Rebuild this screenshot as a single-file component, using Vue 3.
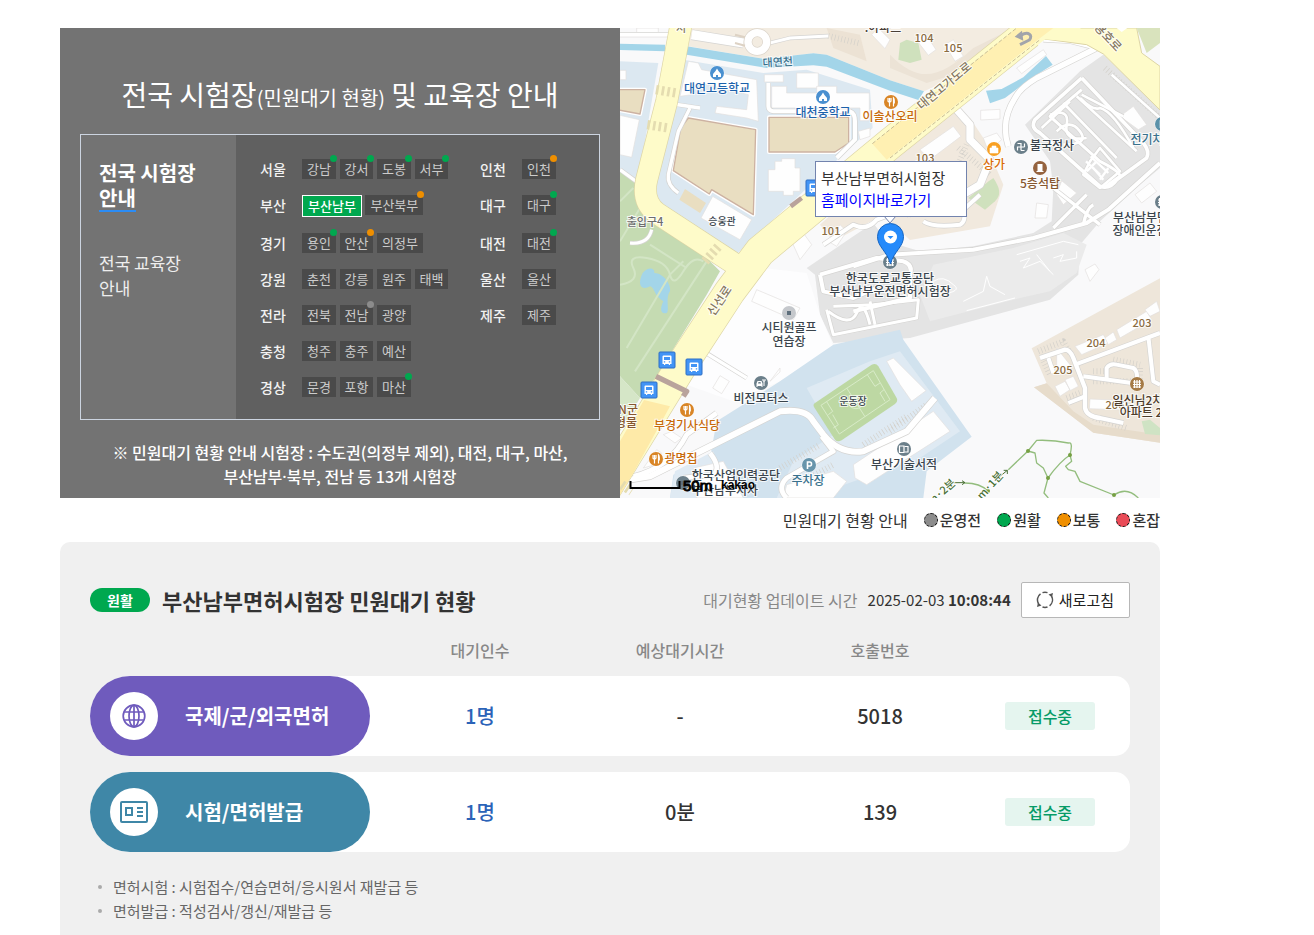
<script setup>
const regionRows = [
  [['서울', [['강남', 'ok'], ['강서', 'ok'], ['도봉', 'ok'], ['서부', 'ok']]], ['인천', [['인천', 'mid']]]],
  [['부산', [['부산남부', 'on'], ['부산북부', 'mid']]], ['대구', [['대구', 'ok']]]],
  [['경기', [['용인', 'ok'], ['안산', 'mid'], ['의정부']]], ['대전', [['대전', 'ok']]]],
  [['강원', [['춘천'], ['강릉'], ['원주'], ['태백']]], ['울산', [['울산']]]],
  [['전라', [['전북'], ['전남', 'off'], ['광양']]], ['제주', [['제주']]]],
  [['충청', [['청주'], ['충주'], ['예산']]]],
  [['경상', [['문경'], ['포항'], ['마산', 'ok']]]]
]

const legend = [
  ['off', '운영전'],
  ['ok', '원활'],
  ['mid', '보통'],
  ['busy', '혼잡']
]

const queues = [
  { kind: 'globe', name: '국제/군/외국면허', waiting: '1명', time: '-', call: '5018' },
  { kind: 'card', name: '시험/면허발급', waiting: '1명', time: '0분', call: '139' }
]

/* Map geometry, three units per pixel. */
const zones = [
  ['#f3ece1', 'M215 0H1190L1000 150L912 190L810 157L620 80L580 76L430 92L205 55Z'],
  ['#ece3d6', 'M810 80C900 170 960 150 1060 60L1180 0L1000 140L920 165L810 120Z'],
  ['#ece2d4', 'M620 0L640 60L740 100L720 20Z'],
  ['#cfe1bd', 'M840 45L860 35L895 45L905 95L870 105L835 95Z'],
  ['#a3d5e9', 'M0 47L135 50V70L0 66Z'],
  ['#a3d5e9', 'M200 55L430 92L580 76L620 80L810 157L912 190L895 216L810 188L620 116L580 112L440 120L200 80Z'],
  ['#a3d5e9', 'M1098 188L1145 183L1210 148L1278 84L1298 110L1235 150L1155 210L1110 226Z'],
  ['#dce8f1', 'M190 95L430 135L560 125L750 185L758 300L700 350L345 683L110 520L100 480L150 250Z'],
  ['#dce8f1', 'M0 100L115 105L90 250L60 430L45 460L0 430Z'],
  ['#c5dbb2', 'M0 425L50 465L55 530L130 600L230 660L300 730L260 800L110 1045L60 1110L0 1045Z'],
  ['#d5e6c7', 'M0 1045L60 1110L0 1210Z'],
  ['#f1e9de', 'M800 405L1000 240L1050 270L1090 330L1150 470L1110 595L870 636L790 560L640 640L600 590Z'],
  ['#cfe1bd', 'M1045 510C1080 480 1105 460 1120 450C1140 480 1145 500 1125 520L1095 545Z'],
  ['#e4e4e4', 'M1450 80L1380 130L1215 290L1290 400L1300 480L1295 580L1240 615L1060 655L900 670L800 640L760 585L700 625L560 720L585 740L600 860L640 945L870 930L1290 815L1375 740L1380 650L1440 580L1560 470L1620 420V240Z'],
  ['#ebebeb', 'M1180 660L1330 615L1400 650L1370 735L1290 790L1200 810L930 880L900 800L940 710Z'],
  ['#fdfdfe', 'M430 720L560 735L600 860L640 955L480 1060L340 1120L200 1070L290 900Z'],
  ['#d1e2ee', 'M640 950L840 905L850 935L1055 1226L920 1330L910 1410H150L160 1340L270 1290L290 1180L480 1060Z'],
  ['#dfeaf3', 'M560 1080L750 1000L840 970L1020 1210L900 1290L560 1410H470L520 1300L640 1220Z'],
  ['#dfeaf3', 'M150 1410L165 1330L280 1270L330 1410Z'],
  ['#eee6da', 'M1235 961L1620 751V1244L1420 1214L1242 1078L1280 1066Z'],
  ['#e7dccb', 'M1242 1078L1280 1066L1360 1150L1420 1190L1620 1220V1244L1420 1214Z'],
  ['#cfe3c4', 'M1565 1180L1590 1175L1620 1200V1222L1575 1218Z'],
  ['#a3d5e9', 'M68 735C85 715 105 720 103 735C130 735 155 770 150 790C135 810 150 850 140 855C120 860 120 840 130 820C100 800 105 780 90 775C65 790 50 770 68 735Z']
]

const roads = [
  [12, 'M0 20H150'], [28, 'M215 20L370 45'], [9, 'M430 50L510 30L625 24'],
  [10, 'M160 228L240 240'], [10, 'M210 240L175 310L145 440Q140 470 175 495'],
  [12, 'M445 165V235Q445 248 460 250H690Q705 255 705 280V335L650 390'],
  [10, 'M0 425L55 465'], [9, 'M95 605Q85 650 30 645'],
  [16, 'M1165 355Q1140 280 1185 210Q1200 180 1250 150L1430 60'],
  [7, 'M1270 38L1350 42L1440 65'],
  [22, 'M1010 245L1050 290V335L1110 395L1080 470L970 535'],
  [12, 'M610 650L700 590Q740 610 770 575L810 560M910 580Q940 600 1020 590Q1040 580 1030 545L1080 500'],
  [12, 'M700 715L810 680L1060 665L1240 630L1400 585L1465 545L1620 405'],
  [10, 'M1300 480L1440 590M1390 590Q1400 540 1420 530M1300 600L1400 500'],
  [11, 'M1385 150L1245 275Q1230 300 1260 315L1440 475Q1470 485 1490 455L1580 390Q1590 370 1570 345L1385 150'],
  [9, 'M1385 185L1290 265L1440 400Q1500 430 1500 445L1450 480'],
  [8, 'M1330 225L1490 390M1370 205L1550 370M1265 300L1350 220'],
  [8, 'M1290 260Q1350 240 1340 290T1400 330M1310 310Q1350 270 1380 310T1330 350M1380 210Q1420 250 1440 240Q1480 250 1540 360'],
  [8, 'M1410 400L1390 440L1440 480L1500 430L1440 360ZM1385 200L1510 265'],
  [8, 'M1475 140L1620 270'],
  [12, 'M600 740L770 690L850 700Q880 710 870 740V810L700 850M600 740L610 790L700 810L770 780'],
  [9, 'M620 845L640 920L890 870L895 815L760 830L640 835M625 850Q690 900 710 855T750 890M750 820L765 890'],
  [18, 'M30 1355L90 1345L260 1260L380 1200L480 1150Q560 1140 580 1180L610 1220Q660 1280 730 1270L860 1210L945 1110'],
  [14, 'M40 1345Q150 1320 200 1220L290 1155M270 1275Q305 1320 280 1340L190 1350'],
  [14, 'M605 1225L640 1270L500 1350Q470 1380 500 1410'],
  [10, 'M250 970L380 1050'],
  [13, 'M1260 990L1335 965Q1350 965 1360 990L1395 1080V1140Q1400 1165 1440 1170L1510 1185'],
  [12, 'M1365 1010L1620 915M1390 1045L1535 1065M1460 1050V1020Q1470 1005 1490 1010L1540 1020Q1555 1030 1550 1060M1585 925L1600 1060L1620 1070M1345 1125L1395 1105M1285 990L1300 1035']
]

const buildings = [
  'M205 100L235 105L245 125L410 155L415 280L380 270L285 255L290 235L380 245L385 200L240 165L215 200L180 205Z',
  'M433 140H490V162H433Z', 'M530 135H595V180H530Z', 'M455 175H500V195H590V175H650V195H748V278H720V240H455Z',
  'M485 392H525V420H540V490H520V502H490V490H445V425H465V400H485Z', 'M278 505L395 575L360 635L243 570Z',
  'M0 262L58 275L35 388L0 380Z', 'M0 127H18V155H0Z', 'M50 0H115V22H50Z', 'M755 20L775 0L810 35L795 62Z',
  'M885 30L915 15L948 65L925 82Z', 'M975 50L1000 35L1030 85L1005 100Z',
  'M1190 120L1270 65L1280 80L1205 137Z', 'M1082 247L1140 244V273L1082 276Z', 'M1090 330L1130 315L1145 335L1105 370Z',
  'M900 365L1000 295L1023 325L930 395Z', 'M515 640L550 615L575 650L540 695Z', 'M625 640L660 590L680 610L650 655Z',
  'M715 310L750 300V325L720 335Z', 'M1250 525L1285 530L1280 570L1245 570Z',
  'M1310 500L1325 458L1370 495L1330 530Z', 'M1500 265L1540 235L1580 290L1555 305Z', 'M1545 500L1590 465L1610 490L1565 525Z',
  'M410 785L540 840L520 875L395 820Z', 'M300 1043L328 1060L305 1097L278 1080Z', 'M450 1060L480 1020L480 1032Z', 'M155 1210L185 1230L165 1245L130 1220Z',
  'M800 1000L820 990L880 1050L918 1088L875 1120L840 1070Z', 'M700 1310L940 1150L990 1210L740 1370L705 1350Z',
  'M500 1370L640 1330L680 1360L640 1410H490Z', 'M220 1320L310 1300L370 1410H230Z',
  'M1365 955L1450 920L1465 945L1385 980Z', 'M1455 930L1480 912L1490 935L1465 950Z', 'M1490 905L1580 850L1595 875L1500 930Z',
  'M1575 845L1610 820L1620 850L1590 865Z', 'M1305 1075L1335 1060L1350 1085L1320 1105ZM1335 1055L1360 1045L1375 1075L1350 1088Z',
  'M1410 1113L1520 1118V1146L1408 1142Z', 'M1395 725L1425 708L1437 725L1410 760Z',
  'M70 1320L110 1265L125 1275L105 1310Z', 'M1310 960L1350 1010L1335 1035L1310 1020Z'
]

const stalls = [
  'M625 24L718 46', 'M1020 250L1050 300M1015 360L1110 440M1040 350L1000 440L950 480', 'M1455 120L1620 270',
  'M950 450L860 500M1010 540L860 560', 'M480 1320L600 1250M730 1250L860 1165M810 1210L920 1130M530 1370L640 1310',
  'M1255 970L1330 940L1350 975M1270 1000L1290 1040M1420 1030H1460M1480 995L1560 1010M1420 1170L1520 1200M1340 1110L1380 1095M1560 1020V1060M1420 1060H1540'
]

/* Labels: text, x, y, colour, size, angle. Map pixels. */
const navy = '#1c62ac'
const dark = '#3a444c'
const rust = '#c86a0a'
const brown = '#8a6c42'
const teal = '#39718c'
const labels = [
  ['.아파트', 263, 4, '#4a4038'], ['대연천', 158, 38, teal, 11, -3],
  ['대연고등학교', 97, 65, navy], ['대천중학교', 203, 89, navy], ['이솔산오리', 270, 93, rust],
  ['104', 304, 14, brown, 11], ['105', 333, 24, brown, 11], ['103', 305, 134, brown, 11], ['101', 211, 207, brown, 11],
  ['대연고가도로', 327, 61, '#85775f', 12, -40], ['용호로', 485, 12, '#85775f', 12, 47], ['신선로', 103, 275, '#85775f', 12, -56], ['서', 61, 4, '#85775f', 11],
  ['불국정사', 432, 122, dark], ['상가', 374, 141, '#d96b05'], ['5층석탑', 420, 160, '#86572f'],
  ['전기차', 527, 116, teal], ['부산남부면허', 526, 194, dark], ['장애인운전', 520, 207, dark],
  ['출입구4', 25, 198, '#6d6d6d', 11], ['승웅관', 102, 197, dark, 10],
  ['한국도로교통공단', 270, 255, dark], ['부산남부운전면허시험장', 270, 268, dark],
  ['시티원골프', 169, 304, dark], ['연습장', 169, 318, dark], ['비전모터스', 141, 375, dark], ['운동장', 233, 377, dark, 10],
  ['부경기사식당', 67, 402, rust], ['광명집', 61, 435, rust], ['N군', 8, 386, '#86572f'], ['형물', 6, 399, '#86572f'],
  ['한국산업인력공단', 116, 452, dark], ['부산남부지사', 105, 467, dark], ['주차장', 188, 457, teal], ['부산기술서적', 284, 441, dark],
  ['203', 522, 299, brown, 11], ['204', 476, 319, brown, 11], ['205', 443, 346, brown, 11], ['206', 495, 381, brown, 11],
  ['일신님2차', 518, 377, '#4d3c2b'], ['아파트 2', 521, 389, '#4d3c2b'],
  ['m·2분', 324, 467, '#497035', 11, -42], ['m·1분', 373, 460, '#497035', 11, -48]
]

const pins = [
  ['school', 97, 45, '#4a90d0'], ['school', 203, 69, '#4a90d0'], ['food', 271, 74, '#d98526'], ['bag', 374, 121, '#f8a023'],
  ['temple', 401, 119, '#6b7f8a'], ['box', 420, 140, '#95633f'], ['dot', 169, 285, '#c5c8cc'], ['car', 141, 355, '#6b7f8a'],
  ['food', 67, 382, '#d98526'], ['food', 36, 431, '#d98526'], ['park', 189, 437, '#6795ac'], ['book', 284, 421, '#6b7f8a'],
  ['flats', 517, 356, '#a57a45'], ['flats', 270, 234, '#6b7f8a'], ['park', 542, 96, '#5a91a9'], ['flats', 542, 174, '#6b7f8a'], ['dot', 63, 455, '#6b7f8a']
]

const stops = [[194, 160], [47, 332], [74, 339], [29, 362]]
</script>

<template>
  <main class="page">
    <section class="intro">
      <div class="finder">
        <h1 class="finder-title">전국 시험장<small>(민원대기 현황)</small> 및 교육장 안내</h1>
        <div class="finder-box">
          <nav class="tabs">
            <a href="#" class="tab active">전국 시험장<br><span>안내</span></a>
            <a href="#" class="tab">전국 교육장<br><span>안내</span></a>
          </nav>
          <div class="regions">
            <div v-for="(row, i) in regionRows" :key="i" class="region-row">
              <div v-for="[region, cities] in row" :key="region" class="region">
                <strong class="region-name">{{ region }}</strong>
                <div class="cities">
                  <template v-for="[city, state] in cities" :key="city">
                    <a href="#" class="city" :class="{ selected: state === 'on' }">{{ city }}<i v-if="state && state !== 'on'" class="dot" :class="state"></i></a>{{ ' ' }}
                  </template>
                </div>
              </div>
            </div>
          </div>
        </div>
        <p class="finder-note">※ 민원대기 현황 안내 시험장 : 수도권(의정부 제외), 대전, 대구, 마산,<br>부산남부<span class="mid-dot">·</span>북부, 전남 등 13개 시험장</p>
      </div>

      <div class="map">
        <svg class="map-canvas" viewBox="0 0 540 470" preserveAspectRatio="xMidYMid slice" role="img" aria-label="부산남부면허시험장 지도">
          <rect width="540" height="470" fill="#f9f9fa" />
          <g transform="scale(.33333)" fill="none" stroke-linejoin="round">
            <path v-for="([fill, d], i) in zones" :key="'z' + i" :d="d" :fill="fill" />
            <g stroke="#d3e5c5" stroke-width="6">
              <path d="M20 960L150 740L190 700M45 1030L260 700M0 520L40 480M0 640L60 540M90 650L200 720M0 770Q60 760 40 720T80 690T150 740T190 730T250 700" />
            </g>
            <g fill="#e9dec1">
              <g stroke="#fff" stroke-width="12">
                <path d="M205 270L407 305L400 560L275 485L268 498L160 428L182 300Z" />
                <path d="M447 268H686V345L645 372H447Z" /><path d="M-10 185H75L60 258L-10 245Z" />
              </g>
              <g stroke="#cdb2a2" stroke-width="4">
                <path d="M205 270L407 305L400 560L275 485L268 498L160 428L182 300Z" />
                <path d="M447 268H686V345L645 372H447Z" /><path d="M-10 185H75L60 258L-10 245Z" />
              </g>
              <path d="M195 483L258 525L240 555L178 515Z" />
            </g>
            <path v-for="(d, i) in stalls" :key="'s' + i" :d="d" stroke="#d3d0ca" stroke-width="18" stroke-dasharray="2 8" />
            <path v-for="(d, i) in buildings" :key="'b' + i" :d="d" fill="#fefefe" stroke="#e2e0de" stroke-width="2" />
            <path v-for="([w, d], i) in roads" :key="'c' + i" :d="d" stroke="#d5d4d2" :stroke-width="w + 4" />
            <path v-for="([w, d], i) in roads" :key="'r' + i" :d="d" stroke="#fff" :stroke-width="w" />
            <g stroke="#fff" stroke-width="3">
              <path d="M940 760Q970 740 1000 770Q1030 790 960 800M1030 820L1090 790L1100 745L1110 775L1155 800M1040 848L1185 810M1190 680L1330 640L1375 650M1200 700L1230 690L1210 720L1260 700L1300 740M1250 680L1290 730M1300 690L1330 680L1320 700L1370 690V670" />
              <path d="M1398 400L1440 440M1412 385L1465 435M1400 430L1430 400M1440 455L1465 420M1420 420L1450 455" stroke-width="7" />
            </g>
            <circle cx="412" cy="42" r="28" stroke="#dbd4ca" stroke-width="26" /><circle cx="412" cy="42" r="28" stroke="#fff" stroke-width="22" />

            <!-- main roads -->
            <g stroke="#ddd5a6">
              <path d="M1225 15L810 347L420 670L330 790L180 1020L20 1280L-60 1410" stroke-width="96" />
              <path d="M185 -20L140 220L80 455Q65 520 110 555L340 705" stroke-width="68" />
              <path d="M1240 0H1550L1565 75L1620 115V246L1450 78L1400 50L1265 32L1200 60Z" fill="#fefbc9" stroke-width="3" />
            </g>
            <g stroke="#fefbc9">
              <path d="M1330 -68L1225 15L810 347L420 670L330 790L180 1020L20 1280L-60 1410" stroke-width="92" />
              <path d="M185 -20L140 220L80 455Q65 520 110 555L370 725" stroke-width="64" />
            </g>
            <path d="M1380 0L1425 45L1270 34L1300 0Z" fill="#fefbc9" />
            <path d="M757 347L1190 0H1300L1250 38L800 395Z" fill="#fff0b2" />
            <path d="M72 1116L150 1135L40 1335L0 1400V1240Z" fill="#feeaa8" />
            <path d="M757 347L1190 0M810 390L1260 35" stroke="#c9bd96" stroke-width="3" stroke-dasharray="12 6" />
            <path d="M1550 0H1620V45L1580 75Z" fill="#d9e3bd" />
            <path d="M1490 0H1522L1505 12Z" fill="#fff" />
            <path d="M108 1045L200 1090L190 1105" stroke="#b9a39c" stroke-width="16" />
            <path d="M512 535L545 510" stroke="#b9a39c" stroke-width="14" />
            <g stroke="#e4dcb0" stroke-width="28" stroke-dasharray="8 9">
              <path d="M108 185L168 195M82 290L145 300M255 700L300 650M5 1370L35 1390" />
            </g>
            <path d="M345 20L375 28M345 45L375 53" stroke="#ddd2c4" stroke-width="6" />
            <path d="M1203 22C1225 8 1240 22 1228 36L1200 50" stroke="#a2a4aa" stroke-width="9" />
            <path d="M1184 26L1206 8L1210 38Z" fill="#a2a4aa" />

            <!-- football pitch -->
            <path d="M585 1125L755 1010Q768 1004 775 1015L830 1110Q835 1120 825 1128L665 1237Q652 1243 645 1235L582 1137Q578 1130 585 1125Z" fill="#bdd8a3" />
            <path d="M603 1132L760 1028L810 1115L658 1218ZM680 1080L735 1166M620 1121L638 1150L625 1160M640 1200L655 1190L638 1160M742 1040L765 1075L780 1065M795 1120L780 1095L792 1085" stroke="#d8ebc8" stroke-width="3" />
            <ellipse cx="708" cy="1123" rx="22" ry="19" stroke="#d8ebc8" stroke-width="3" />

            <!-- walking trail -->
            <g stroke="#93bd7d" stroke-width="4">
              <path d="M1035 1365Q1080 1365 1104 1389M1165 1325L1224 1269L1250 1237Q1300 1235 1345 1245Q1360 1240 1350 1281Q1320 1300 1284 1350L1272 1395L1285 1410M1224 1269L1245 1275L1250 1305L1270 1320L1284 1350M1350 1281L1355 1300L1337 1315L1345 1325L1365 1330L1380 1360L1482 1401Q1520 1375 1555 1410" />
            </g>
            <path d="M1000 1364H1035M1026 1358L1035 1364L1026 1370M1140 1345L1162 1327M1151 1327H1162V1338" stroke="#497035" stroke-width="3" />
            <g fill="#76a043"><circle cx="1104" cy="1389" r="6" /><circle cx="1224" cy="1269" r="6" /><circle cx="1350" cy="1281" r="6" /><circle cx="1284" cy="1350" r="6" /><circle cx="1482" cy="1401" r="6" /></g>
          </g>

          <g v-for="([x, y], i) in stops" :key="'t' + i" :transform="`translate(${x} ${y})`">
            <rect x="-8" y="-8" width="16" height="16" rx="1" fill="#4294f5" stroke="#2e6fc4" />
            <path d="M-3.5 -4.5H3.5Q4.5 -4.5 4.5 -3.5V4H3V5H1.8V4H-1.8V5H-3V4H-4.5V-3.5Q-4.5 -4.5 -3.5 -4.5ZM-3 -3V0H3V-3ZM-3.2 1.3V2.5H-1.8V1.3ZM1.8 1.3V2.5H3.2V1.3Z" fill="#fff" fill-rule="evenodd" />
          </g>

          <g v-for="([kind, x, y, color], i) in pins" :key="'p' + i" :transform="`translate(${x} ${y})`">
            <circle r="7.5" fill="#fff" opacity=".7" />
            <circle r="7" :fill="color" />
            <path v-if="kind === 'school'" d="M0 -4.5L1.5 -2L4 1V4H1V2H-1V4H-4V1L-1.5 -2Z" fill="#fff" />
            <path v-else-if="kind === 'food'" d="M-3 -4V-1Q-3 0 -1.5 0Q0 0 0 -1V-4M-1.5 -4V4.5M2.5 4.5V-4Q3.5 -3 3.3 1H2.5" fill="none" stroke="#fff" stroke-width="1.2" />
            <path v-else-if="kind === 'bag'" d="M-4 -1H4V4H-4ZM-2 -1V-3H2V-1" fill="#fff" stroke="#fff" stroke-width=".6" />
            <path v-else-if="kind === 'temple'" d="M0 3.5V-3.5H-3.5M3.5 0H-3.5V3.5M0 3.5H3.5M3.5 0V-3.5" fill="none" stroke="#fff" stroke-width="1.2" />
            <path v-else-if="kind === 'box'" d="M-2.5 -4H2.5V3H3.5V4H-3.5V3H-2.5Z" fill="#fff" />
            <rect v-else-if="kind === 'dot'" x="-2" y="-2" width="4" height="4" fill="#5e6f7c" />
            <g v-else-if="kind === 'car'">
              <path d="M-4.5 4V.5L-3.5 -2H.5L1.5 .5V4H.5V3H-3.5V4ZM-3 .5H0L-.5 -1H-2.5Z" fill="#fff" fill-rule="evenodd" />
              <path d="M2 -4V-2H4V-4M3 -2V3" fill="none" stroke="#fff" />
            </g>
            <path v-else-if="kind === 'book'" d="M-4.5 -3H0V3.5H-4.5ZM.8 -2.5H4V3H.8" fill="none" stroke="#fff" stroke-width="1.2" />
            <path v-else-if="kind === 'park'" d="M-1.5 4V-3H.8Q2.5 -3 2.5 -1Q2.5 1 .8 1H-1.5" fill="none" stroke="#fff" stroke-width="1.6" />
            <path v-else d="M-2.5 -4V4M0 -4V4M2.5 -4V4M-4 -2H4M-4 .5H4M-4 3H4" fill="none" stroke="#fff" stroke-width="1.2" />
          </g>

          <text
            v-for="([text, x, y, color, size, angle], i) in labels"
            :key="'l' + i"
            class="map-label"
            :x="x" :y="y" :fill="color" :font-size="size || 12"
            :transform="angle ? `rotate(${angle} ${x} ${y})` : null"
          >{{ text }}</text>

          <path d="M10.5 453V460H59.5V453" fill="none" stroke="#000" stroke-width="2" />
          <text class="scale-label" x="63" y="463">50m</text>
          <text class="brand-label" x="101" y="461">kakao</text>

          <path d="M264 188L270 195L276 188" fill="#fff" stroke="#7283ae" />
          <path d="M270.5 236C267 223 257.5 219 257.5 208.5A13 13 0 0 1 283.5 208.5C283.5 219 274 223 270.5 236Z" fill="#258afa" stroke="#1665c2" />
          <circle cx="270.5" cy="209" r="6.5" fill="#fff" /><path d="M267.5 208H273.5L270.5 211Z" fill="#258afa" />
        </svg>
        <div class="popup">
          <span>부산남부면허시험장</span>
          <a href="#">홈페이지바로가기</a>
        </div>
      </div>
    </section>

    <div class="legend">
      <span class="legend-title">민원대기 현황 안내</span>
      <span v-for="[state, text] in legend" :key="state" class="legend-item"><i class="legend-dot" :class="state"></i>{{ text }}</span>
    </div>

    <section class="status">
      <header class="status-head">
        <span class="status-badge">원활</span>
        <h2>부산남부면허시험장 민원대기 현황</h2>
        <span class="update-label">대기현황 업데이트 시간</span>
        <time class="update-time">2025-02-03 <b>10:08:44</b></time>
        <button type="button" class="refresh">
          <svg width="18" height="18" viewBox="0 0 18 18" fill="none" stroke="#555" stroke-width="1.5">
            <path d="M6.5 1.6A7.5 7.5 0 0 1 11.5 1.6M15.6 5.4A7.5 7.5 0 0 1 13.6 14.8M11.5 16A7.5 7.5 0 0 1 6.5 16M2.6 12.8A7.5 7.5 0 0 1 4.5 2.8" />
            <path d="M12.5 3.5L17 2L16 6.5ZM5.5 14.5L1 16L2 11.5Z" fill="#555" stroke="none" />
          </svg>
          새로고침
        </button>
      </header>

      <table class="queue">
        <thead>
          <tr><th class="col-name"></th><th>대기인수</th><th>예상대기시간</th><th>호출번호</th><th class="col-state"></th></tr>
        </thead>
        <tbody>
          <tr v-for="q in queues" :key="q.kind">
            <td class="name-cell">
              <div class="pill" :class="q.kind">
                <span class="pill-icon">
                  <svg v-if="q.kind === 'globe'" width="24" height="24" viewBox="0 0 24 24" fill="none" stroke="#6f5bbd" stroke-width="1.7">
                    <circle cx="12" cy="12" r="10.8" /><ellipse cx="12" cy="12" rx="5" ry="10.8" /><path d="M12 1V23M2.2 8H21.8M2.2 16H21.8" />
                  </svg>
                  <svg v-else width="28" height="22" viewBox="0 0 28 22" fill="none" stroke="#3f87a7" stroke-width="2">
                    <rect x="1" y="1" width="26" height="20" rx="1" /><rect x="6" y="7" width="6" height="7" /><path d="M17 7H23M17 11H23M17 15H23" />
                  </svg>
                </span>
                {{ q.name }}
              </div>
            </td>
            <td class="waiting">{{ q.waiting }}</td>
            <td>{{ q.time }}</td>
            <td>{{ q.call }}</td>
            <td class="state-cell"><span class="state">접수중</span></td>
          </tr>
        </tbody>
      </table>

      <ul class="notes">
        <li>면허시험 : 시험접수/연습면허/응시원서 재발급 등</li>
        <li>면허발급 : 적성검사/갱신/재발급 등</li>
      </ul>
    </section>
  </main>
</template>

<style>
body { margin: 0; background: #fff; }
</style>

<style scoped>
.page {
  box-sizing: border-box;
  max-width: 1160px;
  padding: 28px 0 0 60px;
  color: #333;
  font: 400 16px/24px "Noto Sans CJK KR", sans-serif;
}
a { color: inherit; text-decoration: none; }
.intro { display: grid; grid-template-columns: 56fr 54fr; }

.finder { padding: 44px 20px 10px; background: #737373; color: #fff; }
.finder-title { margin: 0 0 18px; font-size: 28px; font-weight: 400; line-height: 44px; text-align: center; white-space: nowrap; }
.finder-title small { font-size: 20px; line-height: 1; }
.finder-box { display: flex; border: 1px solid #ccd4e0; }
.tabs { flex: 0 0 155px; box-sizing: border-box; padding: 25px 0 0 18px; }
.tab { display: block; margin-bottom: 38px; color: #eee; font-size: 17px; line-height: 25px; }
.tab.active { color: #fff; font-size: 20px; font-weight: 700; }
.tab.active span { display: inline-block; border-bottom: 2px solid #2b8cf5; }
.regions { flex: 1; display: flex; flex-direction: column; gap: 16px; padding: 24px 0 22px 24px; background: #606060; }
.region-row { display: flex; }
.region { display: flex; flex: 0 0 220px; }
.region + .region { flex: 1; }
.region-name { flex: 0 0 42px; color: #f2f2f2; font-size: 14px; font-weight: 500; line-height: 20px; }
.cities { display: flow-root; height: min-content; line-height: 20px; white-space: nowrap; }
.city { position: relative; display: inline-block; padding: 0 5px; background: #4a4a4a; color: #ccc; font-size: 13px; line-height: 20px; vertical-align: top; }
.city.selected { border: 1px solid #fff; background: #00a84f; color: #fff; font-weight: 500; }
.dot { position: absolute; top: -4px; right: -1px; width: 7px; height: 7px; border-radius: 50%; }
.off { background: #8c8c8c; }
.ok { background: #00a84f; }
.mid { background: #ef8f00; }
.busy { background: #e94b57; }
.finder-note { margin: 20px 0 0; font-weight: 500; text-align: center; white-space: nowrap; }
.mid-dot { font-family: "Noto Sans", sans-serif; line-height: 1; }

.map { position: relative; overflow: hidden; }
.map-canvas { position: absolute; display: block; width: 100%; height: 100%; }
.map-label { text-anchor: middle; font-weight: 500; stroke: #fff; stroke-width: 2px; stroke-opacity: .8; paint-order: stroke; }
.scale-label, .brand-label { font-family: "Liberation Sans", Arial, sans-serif; font-weight: 700; fill: #000; }
.scale-label { font-size: 15px; font-weight: 400; stroke: #000; stroke-width: 1px; }
.brand-label { font-size: 12px; }
.popup { position: absolute; top: 133px; left: 195px; box-sizing: border-box; width: 152px; padding: 5px; border: 1px solid #7283ae; background: #fff; font-size: 15px; line-height: 22px; }
.popup span, .popup a { display: block; white-space: nowrap; }
.popup a { color: #00f; }

.legend { display: flex; justify-content: flex-end; align-items: center; gap: 16px; height: 44px; }
.legend-item { display: flex; align-items: center; gap: 2px; font-size: 15px; font-weight: 500; }
.legend-dot { box-sizing: border-box; width: 14px; height: 14px; border: 1px dashed #111; border-radius: 50%; }

.status { padding: 40px 30px 12px; border-radius: 10px 10px 0 0; background: #f0f0f0; }
.status-head { display: flex; align-items: center; height: 36px; white-space: nowrap; }
.status-badge { width: 60px; border-radius: 12px; background: #00a84f; color: #fff; font-size: 14px; font-weight: 700; text-align: center; }
.status-head h2 { margin: 0 auto 0 12px; font-size: 22px; font-weight: 700; }
.update-label { color: #888; }
.update-time { margin: 0 10px; font-size: 15px; }
.update-time b { font-weight: 700; }
.refresh { display: flex; align-items: center; gap: 5px; height: 36px; padding: 0 15px 0 14px; border: 1px solid #b7b7b7; border-radius: 2px; background: #fff; color: #222; font: inherit; font-size: 15px; }

.queue { width: 100%; margin-top: 6px; border-spacing: 0 16px; table-layout: fixed; text-align: center; }
.queue th { padding: 0; color: #888; font-weight: 500; line-height: 20px; }
.queue .col-name { width: 290px; }
.queue .col-state { width: 150px; }
.queue td { height: 80px; padding: 0; background: #fff; font-size: 20px; font-weight: 500; }
.queue .waiting { color: #2b63b8; }
.queue .name-cell { border-radius: 40px 0 0 40px; }
.queue .state-cell { border-radius: 0 15px 15px 0; padding-right: 10px; }
.pill { display: flex; align-items: center; gap: 27px; box-sizing: border-box; width: 280px; height: 80px; padding-left: 20px; border-radius: 40px; color: #fff; font-weight: 700; }
.pill.globe { background: #6f5bbd; }
.pill.card { background: #3f87a7; }
.pill-icon { display: grid; place-items: center; width: 48px; height: 48px; border-radius: 50%; background: #fff; }
.state { display: inline-block; width: 90px; border-radius: 3px; background: #e5f5ef; color: #069b67; font-size: 16px; line-height: 28px; vertical-align: middle; }

.notes { margin: 7px 0 0; padding: 0; list-style: none; color: #666; font-size: 15px; }
.notes li { display: flex; align-items: center; gap: 11px; padding-left: 8px; }
.notes li::before { content: ""; width: 4px; height: 4px; border-radius: 50%; background: #aaa; }
</style>
